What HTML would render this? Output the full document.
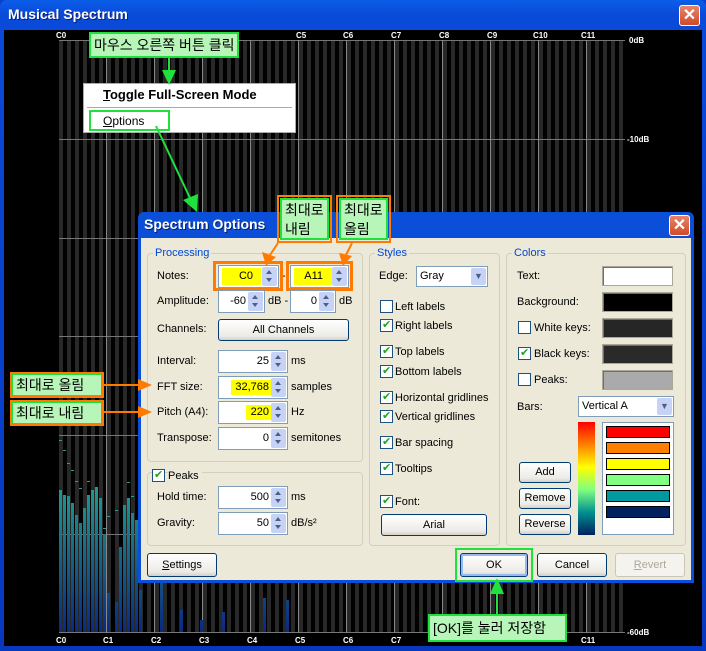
<!DOCTYPE html>
<html><head><meta charset="utf-8"><style>
*{box-sizing:border-box;margin:0;padding:0}
body{width:706px;height:651px;position:relative;overflow:hidden;font-family:Tahoma,"Liberation Sans","Noto Sans CJK KR",sans-serif;font-size:11px;background:#0a3fd0}
.a{position:absolute}
.win{left:0;top:0;width:706px;height:651px;background:linear-gradient(#0a5ee8,#0a4ad8 15px,#0838c0);border-radius:7px 7px 0 0}
.ttl{left:8px;top:6px;color:#fff;font:bold 14px "Liberation Sans",sans-serif;text-shadow:1px 1px #0a1e70}
.xb{width:21px;height:21px;border:1px solid #fff;border-radius:3px;background:linear-gradient(#e8836a,#d04a28);color:#fff;text-align:center;font:bold 16px/19px "Liberation Sans",sans-serif}
.client{left:4px;top:30px;width:698px;height:616px;background:#000}
.grid{left:59px;top:40px;width:566px;height:593px;background:repeating-linear-gradient(90deg,#282828 0 4px,#000 4px 8px)}
.lbl{color:#fff;font:bold 8px "Liberation Sans",sans-serif}
.hl{height:1px;background:#777}
.vl{width:1px;background:#888}
.dlg{left:138px;top:212px;width:556px;height:371px;background:#0b4fd8;border-radius:6px 6px 0 0}
.dbody{left:3px;top:26px;width:550px;height:342px;background:#ECE9D8}
.t{color:#000;font:11px "Liberation Sans","Noto Sans CJK KR",sans-serif;white-space:nowrap}
.gb{border:1px solid #D0D0BF;border-radius:4px}
.gt{color:#0046D5;background:#ECE9D8;padding:0 2px;font:11px "Liberation Sans",sans-serif}
.ed{border:1px solid #7F9DB9;background:#fff;height:23px}
.ed .v{position:absolute;right:17px;top:4px;font:11px "Liberation Sans",sans-serif;padding:0 1px}
.sp{position:absolute;right:1px;top:1px;width:15px;height:19px;background:#C6D3F7;border-radius:2px}
.sp:before{content:"";position:absolute;left:4px;top:3px;border:3px solid transparent;border-bottom:4px solid #4d6185;border-top:0}
.sp:after{content:"";position:absolute;left:4px;top:11px;border:3px solid transparent;border-top:4px solid #4d6185;border-bottom:0}
.btn{border:1px solid #003C74;border-radius:3px;background:linear-gradient(#fff,#ECEBE6 80%,#D6D0C5);text-align:center;font:11px "Liberation Sans",sans-serif}
.cb{width:13px;height:13px;border:1px solid #1C5180;background:#fff}
.ck:after{content:"✔";position:absolute;left:1px;top:-2px;color:#21A121;font-size:11px}
.sw{border:1px solid #ACA899;box-shadow:inset 1px 1px #716F64}
.gc{background:#b8f5b8;border:2px solid #1fe03c;font:14px "Liberation Sans","Noto Sans CJK KR",sans-serif;color:#000;padding:0 3px;white-space:nowrap}
.oc{border:2px solid #ff7a00}
.go{border:2px solid #1fe03c}
.ob{border:3px solid #ff7a00}
</style></head><body>
<div class="a win"></div>
<div class="a ttl">Musical Spectrum</div>
<div class="a xb" style="left:679px;top:5px">✕</div>
<div class="a client"></div>
<div class="a grid"></div>
<div class="a hl" style="left:59px;top:40px;width:566px"></div>
<div class="a hl" style="left:59px;top:139px;width:566px"></div>
<div class="a hl" style="left:59px;top:238px;width:566px"></div>
<div class="a hl" style="left:59px;top:336px;width:566px"></div>
<div class="a hl" style="left:59px;top:435px;width:566px"></div>
<div class="a hl" style="left:59px;top:534px;width:566px"></div>
<div class="a hl" style="left:59px;top:632px;width:566px"></div>
<div class="a vl" style="left:106px;top:40px;height:593px"></div>
<div class="a vl" style="left:154px;top:40px;height:593px"></div>
<div class="a vl" style="left:202px;top:40px;height:593px"></div>
<div class="a vl" style="left:250px;top:40px;height:593px"></div>
<div class="a vl" style="left:298px;top:40px;height:593px"></div>
<div class="a vl" style="left:346px;top:40px;height:593px"></div>
<div class="a vl" style="left:394px;top:40px;height:593px"></div>
<div class="a vl" style="left:442px;top:40px;height:593px"></div>
<div class="a vl" style="left:490px;top:40px;height:593px"></div>
<div class="a vl" style="left:538px;top:40px;height:593px"></div>
<div class="a vl" style="left:586px;top:40px;height:593px"></div>
<svg class="a" style="left:0;top:0" width="706" height="651">
<defs><linearGradient id="bg" gradientUnits="userSpaceOnUse" x1="0" y1="480" x2="0" y2="632"><stop offset="0" stop-color="#1fa090"/><stop offset="1" stop-color="#0a2a80"/></linearGradient></defs>
<g fill="url(#bg)">
<rect x="59" y="490" width="3" height="142"/><rect x="63" y="495" width="3" height="137"/><rect x="67" y="496" width="3" height="136"/><rect x="71" y="503" width="3" height="129"/><rect x="75" y="515" width="3" height="117"/><rect x="79" y="523" width="3" height="109"/><rect x="83" y="508" width="3" height="124"/><rect x="87" y="495" width="3" height="137"/><rect x="91" y="490" width="3" height="142"/><rect x="95" y="487" width="3" height="145"/><rect x="99" y="498" width="3" height="134"/><rect x="103" y="534" width="3" height="98"/><rect x="107" y="593" width="3" height="39"/><rect x="115" y="602" width="3" height="30"/><rect x="119" y="547" width="3" height="85"/><rect x="123" y="505" width="3" height="127"/><rect x="127" y="498" width="3" height="134"/><rect x="131" y="513" width="3" height="119"/><rect x="135" y="520" width="3" height="112"/>
<rect x="139" y="590" width="3" height="42"/><rect x="160" y="583" width="3" height="49"/><rect x="180" y="610" width="3" height="22"/><rect x="200" y="620" width="3" height="12"/><rect x="222" y="612" width="3" height="20"/><rect x="263" y="598" width="3" height="34"/><rect x="286" y="600" width="3" height="32"/>
</g>
<g fill="#1fa090"><rect x="59" y="440" width="3" height="1"/><rect x="63" y="450" width="3" height="1"/><rect x="67" y="463" width="3" height="1"/><rect x="71" y="470" width="3" height="1"/><rect x="75" y="481" width="3" height="1"/><rect x="79" y="488" width="3" height="1"/><rect x="87" y="481" width="3" height="1"/><rect x="103" y="528" width="3" height="1"/><rect x="107" y="516" width="3" height="1"/><rect x="115" y="510" width="3" height="1"/><rect x="127" y="482" width="3" height="1"/><rect x="131" y="496" width="3" height="1"/></g>
</svg>
<div class="a lbl" style="left:56px;top:31px">C0</div>
<div class="a lbl" style="left:296px;top:31px">C5</div>
<div class="a lbl" style="left:343px;top:31px">C6</div>
<div class="a lbl" style="left:391px;top:31px">C7</div>
<div class="a lbl" style="left:439px;top:31px">C8</div>
<div class="a lbl" style="left:487px;top:31px">C9</div>
<div class="a lbl" style="left:533px;top:31px">C10</div>
<div class="a lbl" style="left:581px;top:31px">C11</div>
<div class="a lbl" style="left:56px;top:636px">C0</div>
<div class="a lbl" style="left:103px;top:636px">C1</div>
<div class="a lbl" style="left:151px;top:636px">C2</div>
<div class="a lbl" style="left:199px;top:636px">C3</div>
<div class="a lbl" style="left:247px;top:636px">C4</div>
<div class="a lbl" style="left:295px;top:636px">C5</div>
<div class="a lbl" style="left:343px;top:636px">C6</div>
<div class="a lbl" style="left:391px;top:636px">C7</div>
<div class="a lbl" style="left:581px;top:636px">C11</div>
<div class="a lbl" style="left:629px;top:36px">0dB</div>
<div class="a lbl" style="left:627px;top:135px">-10dB</div>
<div class="a lbl" style="left:627px;top:628px">-60dB</div>

<div class="a" style="left:83px;top:83px;width:213px;height:50px;background:#fff;border:1px solid #aaa"></div>
<div class="a t" style="left:103px;top:87px;font-weight:bold;font-size:13px"><u>T</u>oggle Full-Screen Mode</div>
<div class="a" style="left:87px;top:107px;width:205px;height:1px;background:#aaa"></div>
<div class="a t" style="left:103px;top:114px;font-size:12px"><u>O</u>ptions</div>
<div class="a go" style="left:89px;top:110px;width:81px;height:21px"></div>
<div class="a gc" style="left:89px;top:32px;height:26px;line-height:22px">마우스 오른쪽 버튼 클릭</div>

<div class="a dlg">
<div class="a" style="left:6px;top:4px;color:#fff;font:bold 14px 'Liberation Sans',sans-serif;text-shadow:1px 1px #0a1e70">Spectrum Options</div>
<div class="a xb" style="left:531px;top:3px">✕</div>
<div class="a dbody">
<div class="a gb" style="left:6px;top:15px;width:216px;height:209px"></div>
<div class="a gt" style="left:12px;top:9px">Processing</div>
<div class="a gb" style="left:6px;top:234px;width:216px;height:74px"></div>
<div class="a gb" style="left:228px;top:15px;width:131px;height:293px"></div>
<div class="a gt" style="left:234px;top:9px">Styles</div>
<div class="a gb" style="left:365px;top:15px;width:180px;height:293px"></div>
<div class="a gt" style="left:371px;top:9px">Colors</div>
</div>
</div>
<div class="a t" style="left:157px;top:270px">Notes:</div>
<div class="a ed" style="left:218px;top:265px;width:61px"><div class="a" style="left:3px;top:2px;width:39px;height:17px;background:#ffff00"></div><div class="v" style="right:24px">C0</div><div class="sp"></div></div>
<div class="a t" style="left:282px;top:270px">-</div>
<div class="a ed" style="left:290px;top:265px;width:59px"><div class="a" style="left:3px;top:2px;width:38px;height:17px;background:#ffff00"></div><div class="v" style="right:24px">A11</div><div class="sp"></div></div>
<div class="a ob" style="left:213px;top:261px;width:70px;height:30px"></div>
<div class="a ob" style="left:286px;top:261px;width:67px;height:30px"></div>
<div class="a t" style="left:157px;top:295px">Amplitude:</div>
<div class="a ed" style="left:218px;top:290px;width:47px"><div class="v">-60</div><div class="sp"></div></div>
<div class="a t" style="left:268px;top:295px">dB -</div>
<div class="a ed" style="left:290px;top:290px;width:46px"><div class="v">0</div><div class="sp"></div></div>
<div class="a t" style="left:339px;top:295px">dB</div>
<div class="a t" style="left:157px;top:323px">Channels:</div>
<div class="a btn" style="left:218px;top:319px;width:131px;height:22px;line-height:20px">All Channels</div>
<div class="a t" style="left:157px;top:355px">Interval:</div>
<div class="a ed" style="left:218px;top:350px;width:70px"><div class="v">25</div><div class="sp"></div></div>
<div class="a t" style="left:291px;top:355px">ms</div>
<div class="a t" style="left:157px;top:381px">FFT size:</div>
<div class="a ed" style="left:218px;top:376px;width:70px"><div class="a" style="left:12px;top:3px;width:40px;height:15px;background:#ffff00"></div><div class="v">32,768</div><div class="sp"></div></div>
<div class="a t" style="left:291px;top:381px">samples</div>
<div class="a t" style="left:157px;top:406px">Pitch (A4):</div>
<div class="a ed" style="left:218px;top:401px;width:70px"><div class="a" style="left:27px;top:3px;width:25px;height:15px;background:#ffff00"></div><div class="v">220</div><div class="sp"></div></div>
<div class="a t" style="left:291px;top:406px">Hz</div>
<div class="a t" style="left:157px;top:432px">Transpose:</div>
<div class="a ed" style="left:218px;top:427px;width:70px"><div class="v">0</div><div class="sp"></div></div>
<div class="a t" style="left:291px;top:432px">semitones</div>
<div class="a cb ck" style="left:152px;top:469px"></div>
<div class="a t" style="left:168px;top:470px;background:#ECE9D8;padding-right:3px">Peaks</div>
<div class="a t" style="left:157px;top:491px">Hold time:</div>
<div class="a ed" style="left:218px;top:486px;width:70px"><div class="v">500</div><div class="sp"></div></div>
<div class="a t" style="left:291px;top:491px">ms</div>
<div class="a t" style="left:157px;top:517px">Gravity:</div>
<div class="a ed" style="left:218px;top:512px;width:70px"><div class="v">50</div><div class="sp"></div></div>
<div class="a t" style="left:291px;top:517px">dB/s²</div>
<div class="a btn" style="left:147px;top:553px;width:70px;height:24px;line-height:22px"><u>S</u>ettings</div>
<div class="a t" style="left:379px;top:270px">Edge:</div>
<div class="a ed" style="left:416px;top:266px;width:72px;height:21px"><div class="a t" style="left:3px;top:3px">Gray</div><div class="a" style="right:1px;top:1px;width:15px;height:17px;background:#C6D3F7;border-radius:2px;color:#4d6185;font-size:9px;text-align:center;line-height:17px">▼</div></div>
<div class="a cb" style="left:380px;top:300px"></div><div class="a t" style="left:395px;top:301px">Left labels</div>
<div class="a cb ck" style="left:380px;top:319px"></div><div class="a t" style="left:395px;top:320px">Right labels</div>
<div class="a cb ck" style="left:380px;top:345px"></div><div class="a t" style="left:395px;top:346px">Top labels</div>
<div class="a cb ck" style="left:380px;top:365px"></div><div class="a t" style="left:395px;top:366px">Bottom labels</div>
<div class="a cb ck" style="left:380px;top:391px"></div><div class="a t" style="left:395px;top:392px">Horizontal gridlines</div>
<div class="a cb ck" style="left:380px;top:410px"></div><div class="a t" style="left:395px;top:411px">Vertical gridlines</div>
<div class="a cb ck" style="left:380px;top:436px"></div><div class="a t" style="left:395px;top:437px">Bar spacing</div>
<div class="a cb ck" style="left:380px;top:462px"></div><div class="a t" style="left:395px;top:463px">Tooltips</div>
<div class="a cb ck" style="left:380px;top:495px"></div><div class="a t" style="left:395px;top:496px">Font:</div>
<div class="a btn" style="left:381px;top:514px;width:106px;height:22px;line-height:20px">Arial</div>
<div class="a t" style="left:517px;top:270px">Text:</div>
<div class="a sw" style="left:602px;top:266px;width:71px;height:20px;background:#fff"></div>
<div class="a t" style="left:517px;top:296px">Background:</div>
<div class="a sw" style="left:602px;top:292px;width:71px;height:20px;background:#000"></div>
<div class="a cb" style="left:518px;top:321px"></div><div class="a t" style="left:534px;top:322px">White keys:</div>
<div class="a sw" style="left:602px;top:318px;width:71px;height:20px;background:#262626"></div>
<div class="a cb ck" style="left:518px;top:347px"></div><div class="a t" style="left:534px;top:348px">Black keys:</div>
<div class="a sw" style="left:602px;top:344px;width:71px;height:20px;background:#2a2a2a"></div>
<div class="a cb" style="left:518px;top:373px"></div><div class="a t" style="left:534px;top:374px">Peaks:</div>
<div class="a sw" style="left:602px;top:370px;width:71px;height:20px;background:#aaa"></div>
<div class="a t" style="left:517px;top:401px">Bars:</div>
<div class="a ed" style="left:578px;top:396px;width:96px;height:21px"><div class="a t" style="left:3px;top:3px">Vertical A</div><div class="a" style="right:1px;top:1px;width:15px;height:17px;background:#C6D3F7;border-radius:2px;color:#4d6185;font-size:9px;text-align:center;line-height:17px">▼</div></div>
<div class="a" style="left:578px;top:422px;width:17px;height:113px;background:linear-gradient(#f00,#ff8000 20%,#ff0 40%,#80ff80 60%,#009090 80%,#002060)"></div>
<div class="a" style="left:602px;top:422px;width:72px;height:113px;background:#fff;border:1px solid #7F9DB9"></div>
<div class="a" style="left:606px;top:426px;width:64px;height:12px;background:#f00;border:1px solid #000"></div>
<div class="a" style="left:606px;top:442px;width:64px;height:12px;background:#ff8000;border:1px solid #000"></div>
<div class="a" style="left:606px;top:458px;width:64px;height:12px;background:#ff0;border:1px solid #000"></div>
<div class="a" style="left:606px;top:474px;width:64px;height:12px;background:#80ff80;border:1px solid #000"></div>
<div class="a" style="left:606px;top:490px;width:64px;height:12px;background:#00999f;border:1px solid #000"></div>
<div class="a" style="left:606px;top:506px;width:64px;height:12px;background:#002060;border:1px solid #000"></div>
<div class="a btn" style="left:519px;top:462px;width:52px;height:21px;line-height:19px">Add</div>
<div class="a btn" style="left:519px;top:488px;width:52px;height:21px;line-height:19px">Remove</div>
<div class="a btn" style="left:519px;top:514px;width:52px;height:21px;line-height:19px">Reverse</div>
<div class="a btn" style="left:460px;top:553px;width:68px;height:24px;line-height:22px;box-shadow:inset 0 0 0 2px #98B8F0">OK</div>
<div class="a go" style="left:455px;top:548px;width:78px;height:34px;border-width:2px"></div>
<div class="a btn" style="left:537px;top:553px;width:70px;height:24px;line-height:22px">Cancel</div>
<div class="a btn" style="left:615px;top:553px;width:70px;height:24px;line-height:22px;border-color:#C9C7BA;color:#ACA899;background:#F4F3EE"><u>R</u>evert</div>

<div class="a oc" style="left:277px;top:195px;width:55px;height:48px"></div>
<div class="a gc" style="left:280px;top:198px;width:49px;height:42px;line-height:19px;padding:1px 3px;font-size:14px">최대로<br>내림</div>
<div class="a oc" style="left:336px;top:195px;width:55px;height:48px"></div>
<div class="a gc" style="left:339px;top:198px;width:49px;height:42px;line-height:19px;padding:1px 3px;font-size:14px">최대로<br>올림</div>
<div class="a oc" style="left:10px;top:372px;width:94px;height:26px;background:#b8f5b8;box-shadow:inset 0 0 0 1px #1fe03c;font:14px 'Liberation Sans','Noto Sans CJK KR',sans-serif;padding:1px 4px">최대로 올림</div>
<div class="a oc" style="left:10px;top:400px;width:94px;height:26px;background:#b8f5b8;box-shadow:inset 0 0 0 1px #1fe03c;font:14px 'Liberation Sans','Noto Sans CJK KR',sans-serif;padding:1px 4px">최대로 내림</div>
<div class="a gc" style="left:428px;top:614px;width:139px;height:28px;line-height:24px">[OK]를 눌러 저장함</div>
<svg class="a" style="left:0;top:0" width="706" height="651">
<g stroke="#1fe03c" stroke-width="2" fill="#1fe03c">
<line x1="169" y1="57" x2="169" y2="72"/><polygon points="162,70 176,70 169,85" stroke="none"/>
<line x1="156" y1="126" x2="190" y2="198"/><polygon points="183,200 198,194 197,212" stroke="none"/>
<line x1="497" y1="614" x2="497" y2="592"/><polygon points="490,594 504,594 497,578" stroke="none"/>
</g>
<g stroke="#ff7a00" stroke-width="2" fill="#ff7a00">
<line x1="278" y1="243" x2="270" y2="255"/><polygon points="262,252 276,257 266,266" stroke="none"/>
<line x1="352" y1="243" x2="346" y2="255"/><polygon points="339,253 352,256 343,266" stroke="none"/>
<line x1="104" y1="385" x2="140" y2="385"/><polygon points="138,379 138,391 152,385" stroke="none"/>
<line x1="104" y1="412" x2="140" y2="412"/><polygon points="138,406 138,418 152,412" stroke="none"/>
</g>
</svg>
</body></html>
